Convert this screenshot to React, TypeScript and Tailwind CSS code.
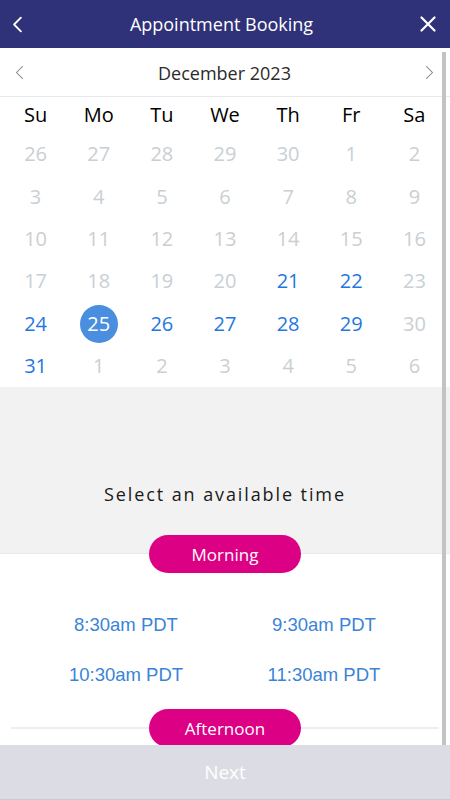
import React, { useState } from 'react';

const weekDays = ['Su', 'Mo', 'Tu', 'We', 'Th', 'Fr', 'Sa'];

type Day = { n: number; kind: 'off' | 'open' | 'muted' };

// December 2023 grid, as shown (leading Nov days, trailing Jan days)
const buildDays = (): Day[] => {
  const days: Day[] = [];
  [26, 27, 28, 29, 30].forEach((n) => days.push({ n, kind: 'muted' }));
  for (let n = 1; n <= 31; n++) {
    const open = (n >= 21 && n <= 29 && n !== 23) || n === 31;
    days.push({ n, kind: open ? 'open' : 'off' });
  }
  [1, 2, 3, 4, 5, 6].forEach((n) => days.push({ n, kind: 'muted' }));
  return days;
};

const morningSlots = ['8:30am PDT', '9:30am PDT', '10:30am PDT', '11:30am PDT'];

const Chevron: React.FC<{ dir: 'left' | 'right'; className?: string; width?: number }> = ({ dir, className, width = 2 }) => (
  <svg viewBox="0 0 12 20" className={className} fill="none" stroke="currentColor" strokeWidth={width} strokeLinecap="round" strokeLinejoin="round">
    {dir === 'left' ? <path d="M10 2 L2 10 L10 18" /> : <path d="M2 2 L10 10 L2 18" />}
  </svg>
);

const SectionPill: React.FC<{ label: string }> = ({ label }) => (
  <div className="flex justify-center">
    <div className="w-[152px] h-[38px] rounded-full bg-[#dc0084] text-white text-[17px] flex items-center justify-center">
      {label}
    </div>
  </div>
);

export default function App() {
  const [selected, setSelected] = useState(25);
  const days = buildDays();

  return (
    <div className="w-[450px] h-[800px] flex flex-col bg-white font-['Open_Sans',sans-serif] overflow-hidden">
      {/* Header */}
      <div className="h-[48px] shrink-0 bg-[#2f3278] text-white flex items-center justify-between px-[12px]">
        <Chevron dir="left" className="w-[11px] h-[17px]" width={2.2} />
        <div className="text-[18px] font-medium">Appointment Booking</div>
        <svg viewBox="0 0 16 16" className="w-[16px] h-[16px] mr-[2px]" stroke="currentColor" strokeWidth={2.2} strokeLinecap="round">
          <path d="M1.5 1.5 L14.5 14.5 M14.5 1.5 L1.5 14.5" />
        </svg>
      </div>

      {/* Scroll area */}
      <div className="relative h-[697px] shrink-0 overflow-hidden">
        <div className="flex flex-col">
          {/* Month switcher */}
          <div className="h-[49px] flex items-center justify-between px-[15px] border-b border-[#e6eaee] text-[#7a7f84]">
            <Chevron dir="left" className="w-[9px] h-[17px]" width={1.4} />
            <div className="text-[18px] text-[#2b2b2b] pt-[2px]">December 2023</div>
            <Chevron dir="right" className="w-[9px] h-[17px] mr-[1px]" width={1.4} />
          </div>

          {/* Calendar */}
          <div className="mx-[4px] grid grid-cols-7">
            {weekDays.map((d) => (
              <div key={d} className="h-[36px] flex items-center justify-center text-[20px] text-black">
                {d}
              </div>
            ))}
            {days.map((d, i) => {
              const isSel = d.kind === 'open' && d.n === selected && i > 5 && i < 36;
              return (
                <div key={i} className="h-[42.4px] flex items-center justify-center">
                  {isSel ? (
                    <div className="w-[38px] h-[38px] rounded-full bg-[#4a8ee0] text-white text-[20px] flex items-center justify-center">
                      {d.n}
                    </div>
                  ) : (
                    <button
                      type="button"
                      onClick={() => d.kind === 'open' && setSelected(d.n)}
                      className={
                        d.kind === 'open'
                          ? 'text-[20px] text-[#1f78e0]'
                          : 'text-[20px] text-[#c9cfd3]'
                      }
                    >
                      {d.n}
                    </button>
                  )}
                </div>
              );
            })}
          </div>

          {/* Prompt */}
          <div className="h-[167px] bg-[#f2f2f2] border-b border-[#e6eaee] flex items-end justify-center pb-[45px]">
            <div className="text-[18px] tracking-[1.9px] text-[#1a1a1a]">Select an available time</div>
          </div>

          <div className="-mt-[19px]">
            <SectionPill label="Morning" />
          </div>

          {/* Morning slots */}
          <div className="w-[396px] mx-auto grid grid-cols-2 pt-[27px] pb-[9px] font-['Liberation_Sans',Arial,sans-serif]">
            {morningSlots.map((s) => (
              <div key={s} className="h-[50px] flex items-center justify-center text-[18.5px] text-[#3a84d8]">
                {s}
              </div>
            ))}
          </div>

          {/* Afternoon */}
          <div className="mx-[11px] mt-[18px] border-t-2 border-[#eceff2]">
            <div className="-mt-[20px]">
              <SectionPill label="Afternoon" />
            </div>
          </div>
        </div>

        {/* overlay scrollbar */}
        <div className="absolute right-[4px] top-[4px] bottom-0 w-[4px] bg-[#c3c3c3]" />
      </div>

      {/* Footer */}
      <div className="h-[55px] shrink-0 bg-[#dcdce4] border-b border-[#c9c9d1] flex items-center justify-center">
        <span className="text-[19px] text-white">Next</span>
      </div>
    </div>
  );
}
